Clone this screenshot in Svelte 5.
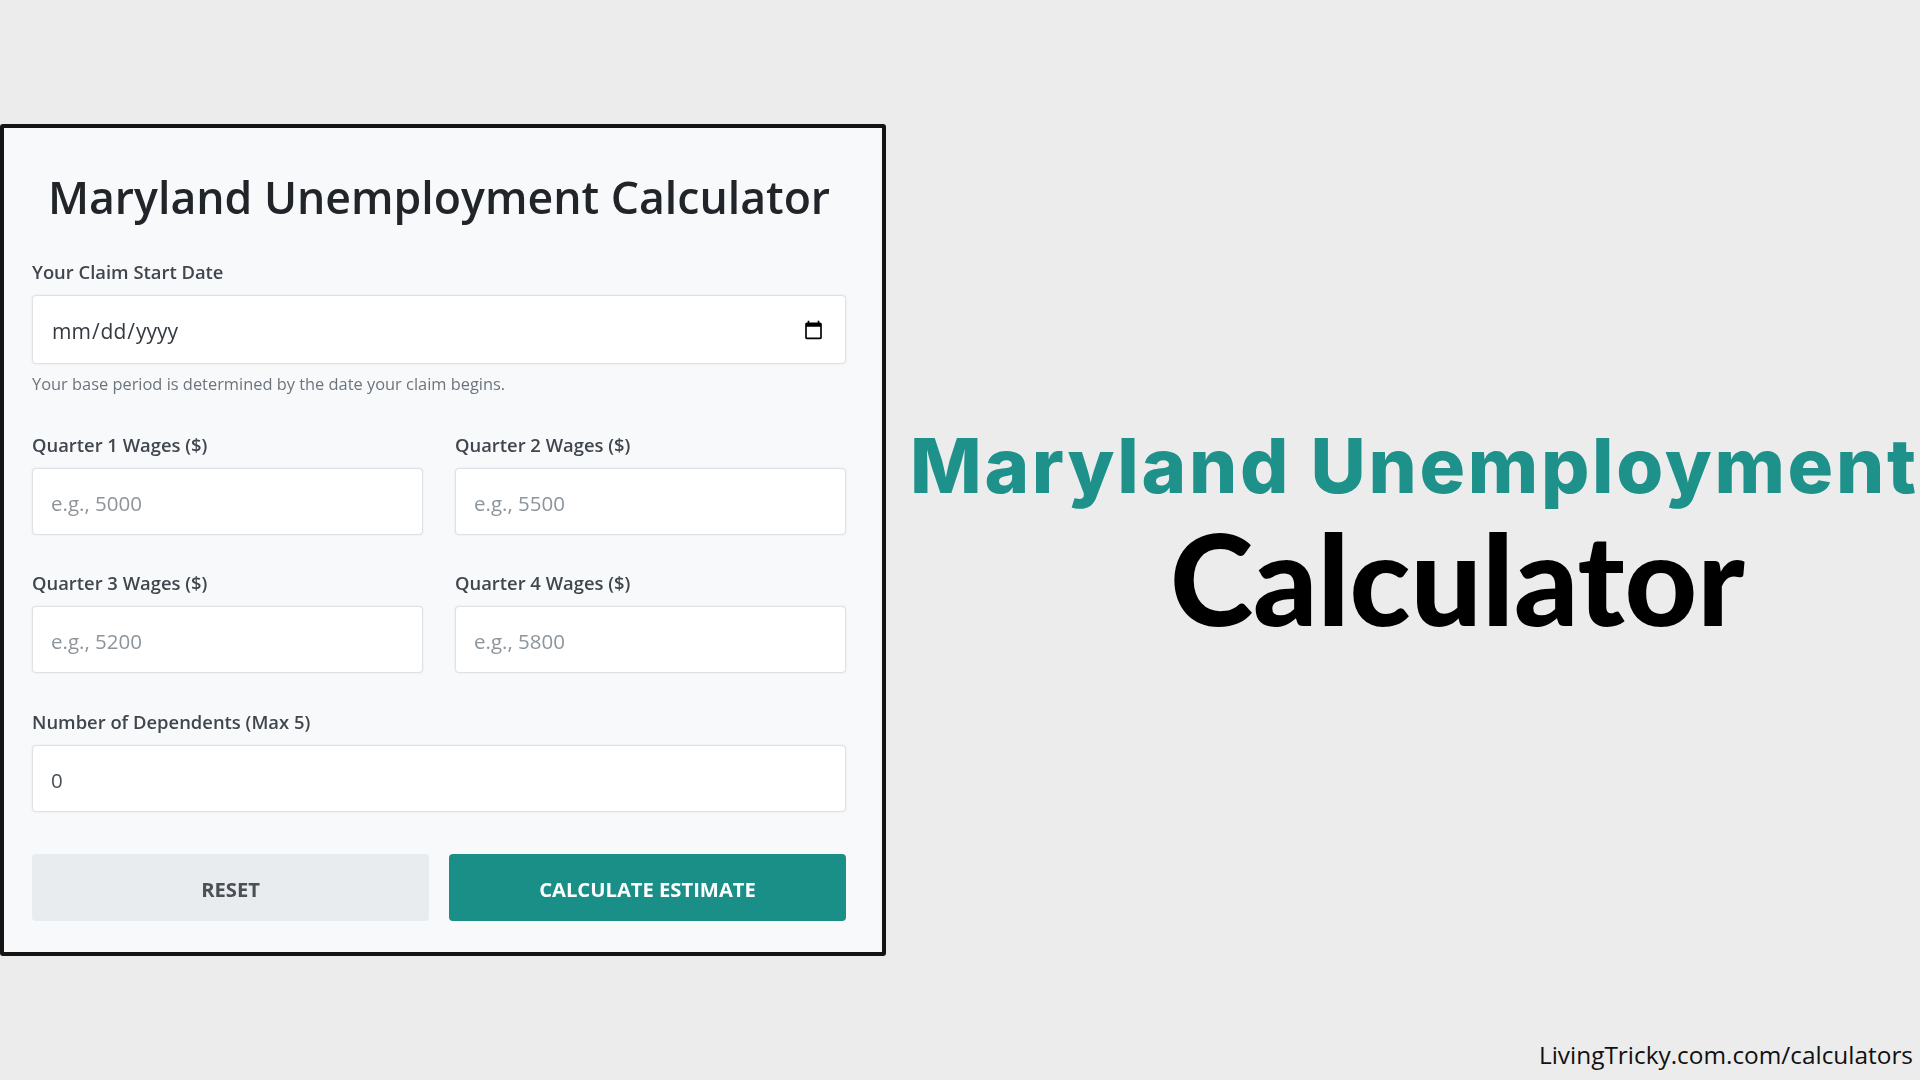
<!-- Maryland unemployment calculator promo slide -->
<script>
  const wageFields = [
    { label: 'Quarter 1 Wages ($)', placeholder: 'e.g., 5000' },
    { label: 'Quarter 2 Wages ($)', placeholder: 'e.g., 5500' },
    { label: 'Quarter 3 Wages ($)', placeholder: 'e.g., 5200' },
    { label: 'Quarter 4 Wages ($)', placeholder: 'e.g., 5800' }
  ];
</script>

<div class="page">
  <form class="card">
    <h1>Maryland Unemployment Calculator</h1>

    <label class="field date-field">
      <span>Your Claim Start Date</span>
      <input type="date" />
      <small>Your base period is determined by the date your claim begins.</small>
    </label>

    <div class="wages">
      {#each wageFields as field}
        <label class="field">
          <span>{field.label}</span>
          <input type="text" placeholder={field.placeholder} />
        </label>
      {/each}
    </div>

    <label class="field">
      <span>Number of Dependents (Max 5)</span>
      <input type="number" value="0" min="0" max="5" />
    </label>

    <div class="actions">
      <button type="button" class="reset">RESET</button>
      <button type="button" class="submit">CALCULATE ESTIMATE</button>
    </div>
  </form>

  <div class="headline">
    <h2>Maryland Unemployment</h2>
    <p>Calculator</p>
  </div>

  <div class="footer">LivingTricky.com.com/calculators</div>
</div>

<style>
  :global(body) {
    margin: 0;
    background: #ececec;
  }

  .page {
    width: 1920px;
    height: 1080px;
    box-sizing: border-box;
    padding-top: 124px;
    display: grid;
    grid-template-columns: 886px minmax(0, 1fr);
    grid-template-rows: 832px 1fr;
    overflow: hidden;
    font-family: "Open Sans", "Liberation Sans", sans-serif;
  }

  .card {
    box-sizing: border-box;
    background: #f8f9fa;
    border: 4px solid #141414;
    border-radius: 3px;
    padding: 0 36px 0 28px;
    filter: blur(0.5px);
  }

  .card h1 {
    margin: 40px 0 33px;
    text-align: center;
    font-size: 44.6px;
    line-height: 58px;
    font-weight: 600;
    color: #212529;
    white-space: nowrap;
  }

  .field {
    display: block;
  }

  .field span {
    display: block;
    font-size: 18.4px;
    line-height: 26px;
    font-weight: 600;
    color: #3f464d;
    margin-bottom: 10px;
  }

  .field input {
    display: block;
    width: 100%;
    height: 67px;
    box-sizing: border-box;
    padding: 2px 19px 0 18px;
    font-family: inherit;
    font-size: 20.5px;
    color: #495057;
    background: #fff;
    border: 1.5px solid #dee2e6;
    border-radius: 4px;
    box-shadow: 0 0 2px rgba(0, 0, 0, 0.1);
  }

  .field input[type="date"] {
    height: 69px;
    font-size: 21px;
    color: #343a40;
  }

  .field input::placeholder {
    color: #8d959c;
    opacity: 1;
  }

  .date-field small {
    display: block;
    margin-top: 8px;
    font-size: 16.4px;
    line-height: 24px;
    color: #6c757d;
  }

  .wages {
    display: grid;
    grid-template-columns: 391px 391px;
    column-gap: 32px;
    row-gap: 35px;
    margin: 36px 0 36px;
  }

  .actions {
    display: grid;
    grid-template-columns: 397px 397px;
    column-gap: 20px;
    margin-top: 42px;
  }

  .actions button {
    height: 67px;
    padding: 2px 0 0;
    border: 0;
    border-radius: 4px;
    font-family: inherit;
    font-size: 20.2px;
    font-weight: 700;
  }

  .reset {
    background: #e9ecef;
    color: #495057;
  }

  .submit {
    background: #1a8f87;
    color: #fff;
  }

  .headline {
    white-space: nowrap;
    padding: 296px 0 0 24px;
  }

  .headline h2 {
    margin: 0;
    font-family: Inter, sans-serif;
    font-size: 76px;
    line-height: 90px;
    font-weight: 800;
    letter-spacing: 2.7px;
    color: #1f918b;
  }

  .headline p {
    margin: 3px 0 0;
    padding-left: 260px;
    font-family: Lato, sans-serif;
    font-size: 126px;
    line-height: 130px;
    font-weight: 900;
    color: #000;
  }

  .footer {
    grid-column: 1 / -1;
    justify-self: end;
    align-self: end;
    padding: 0 7px 8px 0;
    font-size: 24.4px;
    line-height: 34px;
    color: #111;
  }
</style>
